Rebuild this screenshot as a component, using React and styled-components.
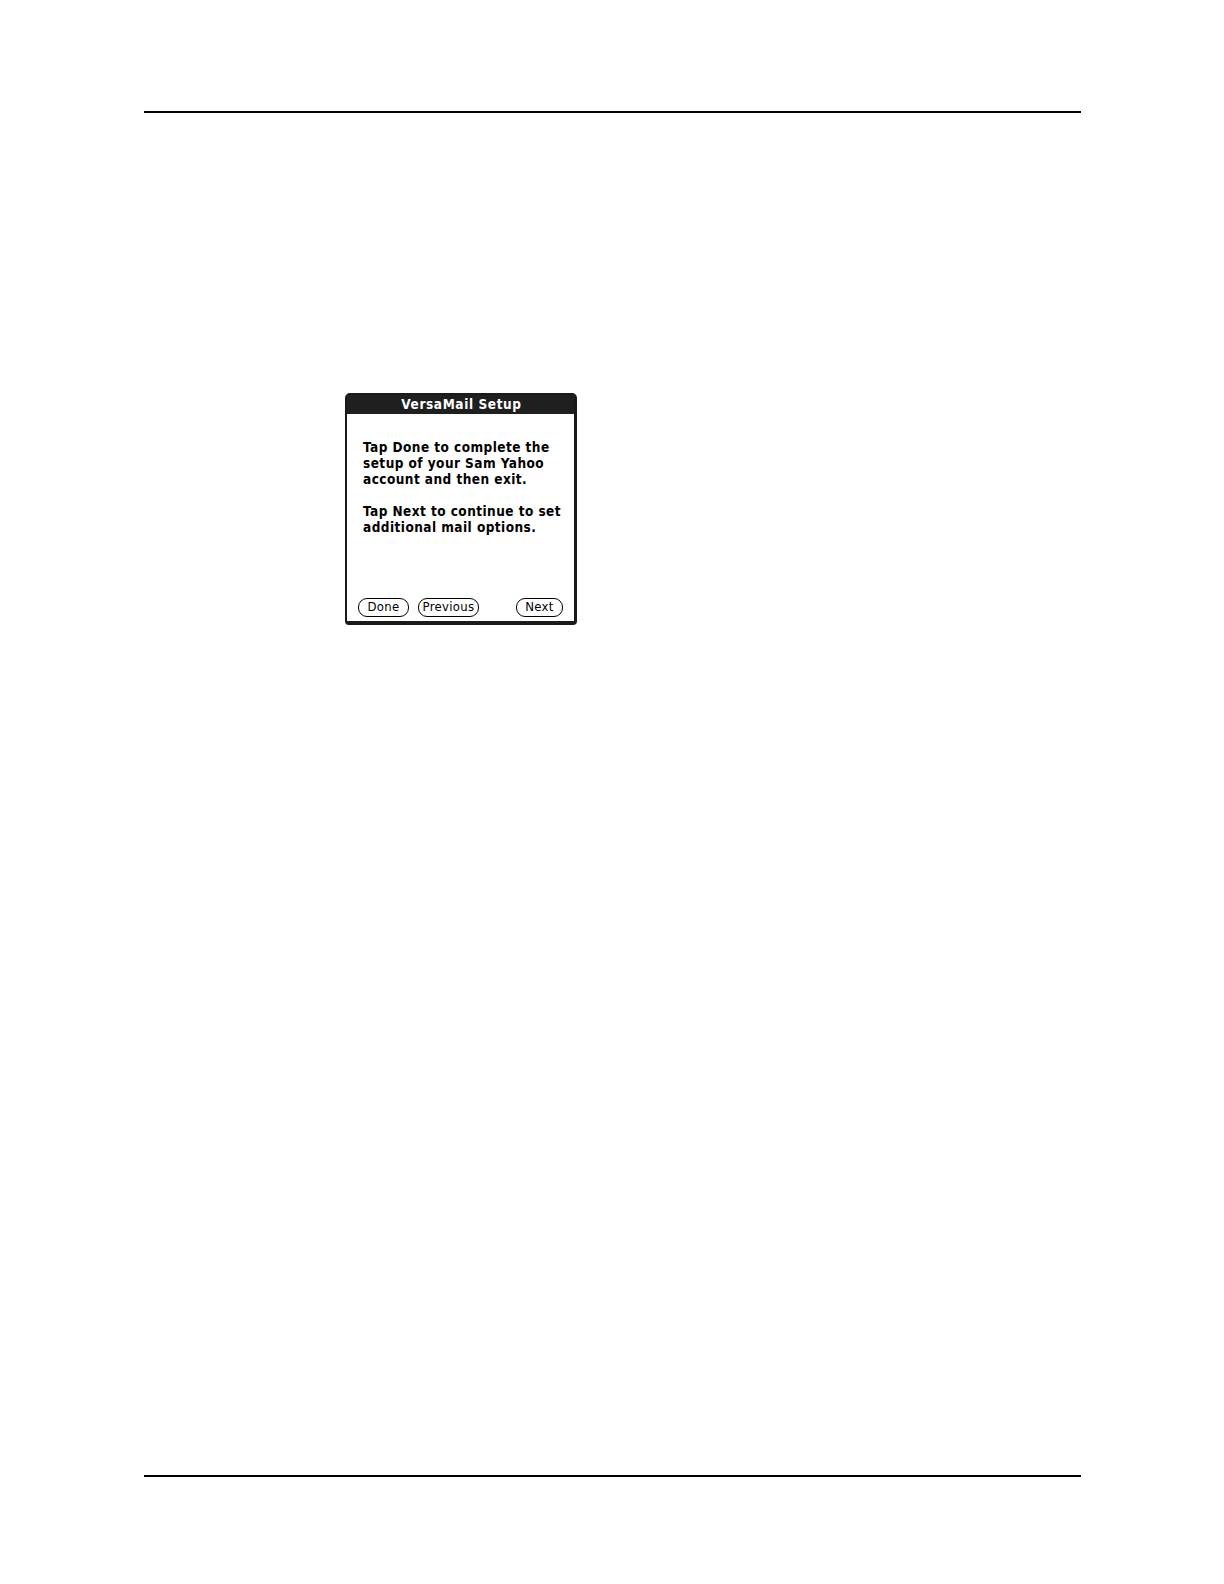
import styled, { createGlobalStyle } from "styled-components";

const Global = createGlobalStyle`
  html, body {
    margin: 0;
    padding: 0;
    background: #ffffff;
  }
`;

const Page = styled.div`
  width: 1224px;
  height: 1584px;
  box-sizing: border-box;
  padding: 111px 143px 0 144px;
  display: flex;
  flex-direction: column;
`;

const Rule = styled.div`
  height: 2px;
  background: #000;
`;

const Content = styled.div`
  height: ${({ h }) => h}px;
  padding: 280px 0 0 201px;
  box-sizing: border-box;
`;

const Dialog = styled.div`
  width: 232px;
  height: 232px;
  box-sizing: border-box;
  border: 2px solid #1a1a1a;
  border-bottom-width: 4px;
  border-right-width: 3px;
  border-radius: 5px 5px 4px 4px;
  display: flex;
  flex-direction: column;
  background: #fff;
`;

const TitleBar = styled.div`
  height: 19px;
  background: #1f1f1f;
  color: #fff;
  font-family: "DejaVu Sans Condensed", "DejaVu Sans", sans-serif;
  font-weight: bold;
  font-size: 13.5px;
  letter-spacing: 0.6px;
  line-height: 19px;
  text-align: center;
  padding-left: 2px;
`;

const Body = styled.div`
  flex: 1;
  padding: 25px 0 0 16px;
  font-family: "DejaVu Sans Condensed", "DejaVu Sans", sans-serif;
  font-weight: bold;
  font-size: 13.5px;
  letter-spacing: 0.45px;
  line-height: 16px;
  color: #000;
`;

const Para = styled.p`
  margin: 0 0 16px;
  white-space: nowrap;
`;

const Buttons = styled.div`
  display: flex;
  align-items: center;
  padding: 0 11px 4px 11px;
  gap: 9px;
`;

const Button = styled.div`
  height: 19px;
  box-sizing: border-box;
  border: 1.5px solid #000;
  border-radius: 9px;
  padding: 0 ${({ pad }) => pad}px;
  min-width: ${({ w }) => w}px;
  margin-left: ${({ push }) => (push ? "auto" : "0")};
  font-family: "DejaVu Sans Condensed", "DejaVu Sans", sans-serif;
  font-size: 13px;
  letter-spacing: 0.3px;
  line-height: 16px;
  text-align: center;
  color: #000;
`;

export default function App() {
  return (
    <>
      <Global />
      <Page>
        <Rule />
        <Content h={1362}>
          <Dialog>
            <TitleBar>VersaMail Setup</TitleBar>
            <Body>
              <Para>
                Tap Done to complete the
                <br />
                setup of your Sam Yahoo
                <br />
                account and then exit.
              </Para>
              <Para>
                Tap Next to continue to set
                <br />
                additional mail options.
              </Para>
            </Body>
            <Buttons>
              <Button w={51} pad={4}>Done</Button>
              <Button w={61} pad={2}>Previous</Button>
              <Button w={47} pad={4} push>Next</Button>
            </Buttons>
          </Dialog>
        </Content>
        <Rule />
      </Page>
    </>
  );
}
